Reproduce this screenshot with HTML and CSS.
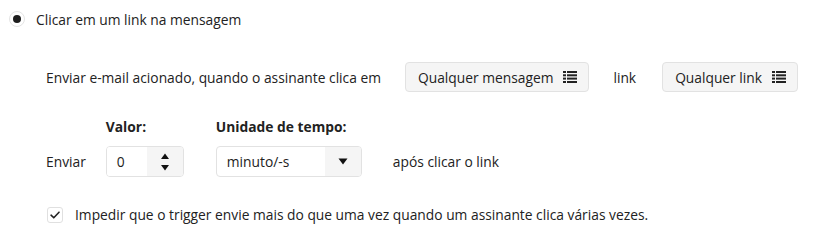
FILE: index.html
```html
<!DOCTYPE html>
<html lang="pt">
<head>
<meta charset="utf-8">
<link rel="stylesheet" href="styles.css">
</head>
<body>
<div class="page">
  <label class="radio-row">
    <span class="radio"><span class="radio-dot"></span></span>
    <span class="radio-label">Clicar em um link na mensagem</span>
  </label>

  <div class="trigger-row">
    <span class="text">Enviar e-mail acionado, quando o assinante clica em</span>
    <button class="btn btn-msg">Qualquer mensagem
      <svg class="list-icon" viewBox="0 0 14 12" width="14" height="12"><g fill="#222"><rect x="0" y="0" width="3" height="2"/><rect x="4" y="0" width="10" height="2"/><rect x="0" y="3.3" width="3" height="2"/><rect x="4" y="3.3" width="10" height="2"/><rect x="0" y="6.6" width="3" height="2"/><rect x="4" y="6.6" width="10" height="2"/><rect x="0" y="10" width="3" height="2"/><rect x="4" y="10" width="10" height="2"/></g></svg>
    </button>
    <span class="text link-word">link</span>
    <button class="btn btn-link">Qualquer link
      <svg class="list-icon" viewBox="0 0 14 12" width="14" height="12"><g fill="#222"><rect x="0" y="0" width="3" height="2"/><rect x="4" y="0" width="10" height="2"/><rect x="0" y="3.3" width="3" height="2"/><rect x="4" y="3.3" width="10" height="2"/><rect x="0" y="6.6" width="3" height="2"/><rect x="4" y="6.6" width="10" height="2"/><rect x="0" y="10" width="3" height="2"/><rect x="4" y="10" width="10" height="2"/></g></svg>
    </button>
  </div>

  <div class="delay-row">
    <span class="text send-label">Enviar</span>
    <div class="field field-value">
      <span class="field-title">Valor:</span>
      <div class="number-input">
        <span class="number-val">0</span>
        <span class="spinner">
          <svg viewBox="0 0 10 20" width="10" height="20"><path d="M1 7 L5 1.5 L9 7 Z" fill="#111"/><path d="M1 13 L9 13 L5 18.5 Z" fill="#111"/></svg>
        </span>
      </div>
    </div>
    <div class="field field-unit">
      <span class="field-title">Unidade de tempo:</span>
      <div class="select">
        <span class="select-val">minuto/-s</span>
        <span class="select-arrow">
          <svg viewBox="0 0 10 7" width="10" height="7"><path d="M0.5 0.5 L9.5 0.5 L5 6.5 Z" fill="#111"/></svg>
        </span>
      </div>
    </div>
    <span class="text after-label">após clicar o link</span>
  </div>

  <label class="check-row">
    <span class="checkbox">
      <svg viewBox="0 0 16 16" width="16" height="16"><path d="M3.5 8.2 L6.6 11.2 L12.6 4.8" fill="none" stroke="#222" stroke-width="1.8" stroke-linecap="round" stroke-linejoin="round"/></svg>
    </span>
    <span class="check-label">Impedir que o trigger envie mais do que uma vez quando um assinante clica várias vezes.</span>
  </label>
</div>
</body>
</html>
```

FILE: styles.css
```css
* { box-sizing: border-box; }
html, body { margin: 0; padding: 0; background: #fff; }
body {
  font-family: "Open Sans", "Noto Sans", sans-serif;
  font-size: 13.8px;
  color: #222;
}
.page {
  width: 837px;
  height: 250px;
  padding-top: 9px;
}
.radio-row {
  display: flex;
  align-items: center;
  gap: 11px;
  padding-left: 9px;
  height: 20px;
}
.radio {
  width: 16px;
  height: 16px;
  border-radius: 50%;
  border: 1px solid #e4e4e4;
  background: #fff;
  display: flex;
  align-items: center;
  justify-content: center;
}
.radio-dot {
  width: 8px;
  height: 8px;
  border-radius: 50%;
  background: #1e1e1e;
}
.trigger-row {
  display: flex;
  align-items: center;
  padding-left: 46px;
  margin-top: 33px;
  height: 30px;
}
.btn {
  font-family: inherit;
  font-size: 13.8px;
  color: #222;
  background: #f5f5f5;
  border: 1px solid #e2e2e2;
  border-radius: 4px;
  height: 30px;
  display: flex;
  align-items: center;
  gap: 10px;
  padding: 0 11px 0 12px;
  cursor: pointer;
}
.btn-msg { margin-left: 24px; }
.link-word { margin-left: 24px; }
.btn-link { margin-left: 26px; }
.list-icon { display: block; }
.delay-row {
  display: flex;
  align-items: flex-end;
  padding-left: 46px;
  margin-top: 26px;
}
.send-label {
  height: 31px;
  line-height: 31px;
}
.field {
  display: flex;
  flex-direction: column;
  gap: 10px;
}
.field-title {
  font-weight: 700;
  line-height: 18px;
}
.field-value { margin-left: 20px; }
.field-unit { margin-left: 32px; }
.number-input {
  width: 78px;
  height: 31px;
  border: 1px solid #e2e2e2;
  border-radius: 4px;
  display: flex;
  overflow: hidden;
}
.number-val {
  flex: 1;
  padding-left: 10px;
  line-height: 29px;
  background: #fff;
}
.spinner {
  width: 36px;
  background: #f5f5f5;
  display: flex;
  align-items: center;
  justify-content: center;
}
.spinner svg { display: block; }
.select {
  width: 146px;
  height: 31px;
  border: 1px solid #e2e2e2;
  border-radius: 4px;
  display: flex;
  overflow: hidden;
}
.select-val {
  flex: 1;
  padding-left: 10px;
  line-height: 29px;
}
.select-arrow {
  width: 36px;
  background: #f5f5f5;
  display: flex;
  align-items: center;
  justify-content: center;
}
.select-arrow svg { display: block; }
.after-label {
  margin-left: 31px;
  height: 31px;
  line-height: 31px;
}
.check-row {
  display: flex;
  align-items: center;
  gap: 12px;
  padding-left: 47px;
  margin-top: 28px;
}
.checkbox {
  width: 16px;
  height: 16px;
  border: 1px solid #e0e0e0;
  border-radius: 3px;
  display: flex;
  align-items: center;
  justify-content: center;
}
.checkbox svg { display: block; }
```
